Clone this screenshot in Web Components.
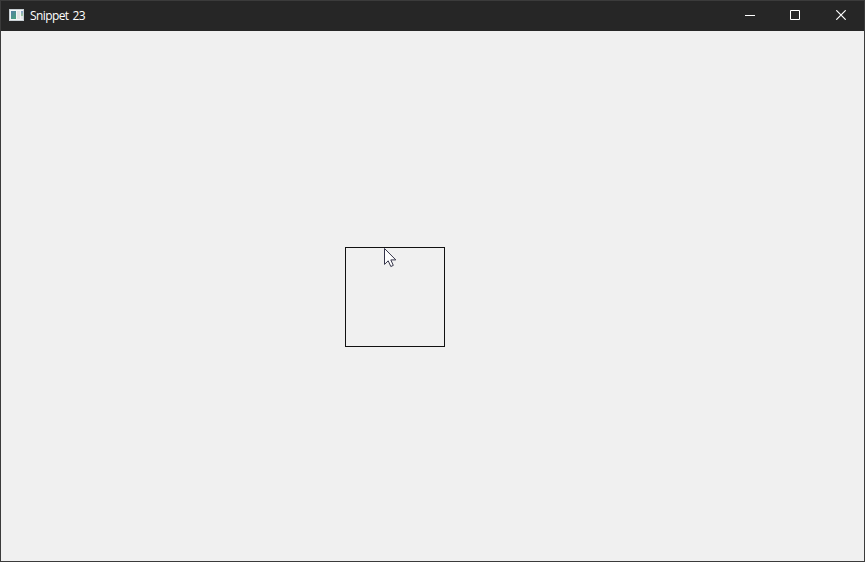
<!DOCTYPE html>
<html lang="en">
<head>
<meta charset="utf-8">
<title>Snippet 23</title>
<style>
html, body { margin: 0; height: 100%; overflow: hidden; }
body { font-family: "Open Sans", "Noto Sans", sans-serif; }
</style>
</head>
<body>
<app-window>
  <title-bar slot="title">Snippet 23</title-bar>
  <drawing-canvas>
    <tracker-box></tracker-box>
    <mouse-pointer></mouse-pointer>
  </drawing-canvas>
</app-window>
<script>
function define(name, html) {
  customElements.define(name, class extends HTMLElement {
    constructor() {
      super();
      this.attachShadow({ mode: 'open' }).innerHTML = html;
    }
  });
}

define('app-window', `
<style>
:host { display: flex; flex-direction: column; box-sizing: border-box; width: 100vw; height: 100vh;
  border: 1px solid #3b3b3b; background: #f0f0f0; }
</style>
<slot name="title"></slot><slot></slot>`);

define('app-icon', `
<style>:host { display: block; width: 15px; height: 12px; } svg { display: block; }</style>
<svg width="15" height="12" viewBox="0 0 15 12" shape-rendering="crispEdges">
  <defs>
    <linearGradient id="g" x1="0" y1="0" x2=".6" y2="1"><stop offset="0" stop-color="#5580a5"/><stop offset="1" stop-color="#4c9d80"/></linearGradient>
    <linearGradient id="h" x1="0" y1="0" x2="0" y2="1"><stop offset="0" stop-color="#86a0d0"/><stop offset="1" stop-color="#9fcb98"/></linearGradient>
  </defs>
  <rect width="15" height="12" fill="#c9d0d4"/>
  <rect x="1" y="1" width="13" height="10" fill="#f4f5f6"/>
  <rect x="2" y="2" width="5" height="8" fill="url(#g)"/>
  <rect x="8" y="2" width="3" height="8" fill="#e4e4e4"/>
  <rect x="12" y="2" width="2" height="5" fill="url(#h)"/>
  <rect x="12" y="7" width="2" height="3" fill="#e6e7e8"/>
</svg>`);

define('caption-button', `
<style>
:host { display: flex; box-sizing: border-box; width: 46px; height: 30px; padding-bottom: 2px;
  align-items: center; justify-content: center; color: #fff; }
:host([kind="min"]) { width: 44px; }
svg { display: none; }
:host([kind="min"]) .min, :host([kind="max"]) .max, :host([kind="close"]) .close { display: block; }
</style>
<svg class="min" width="10" height="10"><path d="M0 5.5H10" stroke="currentColor"/></svg>
<svg class="max" width="10" height="10"><path d="M.5 .5H9.5V9.5H.5Z" fill="none" stroke="currentColor"/></svg>
<svg class="close" width="10" height="10"><path d="M.3 .3L9.7 9.7M9.7 .3L.3 9.7" stroke="currentColor" stroke-width="1.2"/></svg>`);

define('title-bar', `
<style>
:host { display: flex; flex: none; height: 30px; background: #262626; color: #fff; align-items: center;
  padding-left: 8px; font-size: 12px; line-height: 16px; }
app-icon { margin: 0 6px 2px 0; flex: none; }
.name { flex: 1; white-space: nowrap; letter-spacing: -.6px; word-spacing: 1.4px; }
</style>
<app-icon></app-icon><span class="name"><slot></slot></span>
<caption-button kind="min"></caption-button>
<caption-button kind="max"></caption-button>
<caption-button kind="close"></caption-button>`);

define('drawing-canvas', `
<style>:host { display: block; position: relative; flex: 1; background: #f0f0f0; }</style><slot></slot>`);

define('tracker-box', `
<style>:host { position: absolute; left: 344px; top: 216px; width: 98px; height: 98px; border: 1px solid #111; }</style>`);

define('mouse-pointer', `
<style>:host { position: absolute; left: 383px; top: 217px; width: 13px; height: 20px; } svg { display: block; }</style>
<svg width="13" height="20"><path d="M.5 .5V16.4L4.2 12.8L6.8 18.5L9.3 17.4L6.8 11.9H11.8Z" fill="#fff" stroke="#35354a" stroke-width="1"/></svg>`);
</script>
</body>
</html>
